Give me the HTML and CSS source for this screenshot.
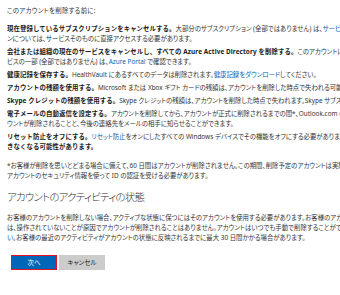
FILE: index.html
```html
<!DOCTYPE html>
<html lang="ja">
<head>
  <meta charset="utf-8">
  <title>アカウントの削除</title>
  <link rel="stylesheet" href="styles.css">
</head>
<body>
  <div class="page">
    <p class="intro">このアカウントを削除する前に:</p>

    <p class="item">
      <span class="line"><b>現在登録しているサブスクリプションをキャンセルする。</b>大部分のサブスクリプション (全部ではありません) は、<a href="#">サービスとサブスクリプション</a> でキャンセルできます。その他のサブスクリプショ</span>
      <span class="line">ンについては、サービスそのものに直接アクセスする必要があります。</span>
    </p>

    <p class="item">
      <span class="line"><b>会社または組織の現在のサービスをキャンセルし、すべての Azure Active Directory を削除する。</b>このアカウントに登録されているサー</span>
      <span class="line">ビスの一部 (全部ではありません) は、<a href="#">Azure Portal</a> で確認できます。</span>
    </p>

    <p class="item">
      <span class="line"><b>健康記録を保存する。</b>HealthVault にあるすべてのデータは削除されます。<a href="#">健康記録をダウンロード</a>してください。</span>
    </p>

    <p class="item">
      <span class="line"><b>アカウントの残額を使用する。</b>Microsoft または Xbox ギフト カードの残額は、アカウントを削除した時点で失われる可能性があります。</span>
    </p>

    <p class="item">
      <span class="line"><b>Skype クレジットの残額を使用する。</b>Skype クレジットの残額は、アカウントを削除した時点で失われます。Skype サブスクリプションは自動的にキャンセルされます。</span>
    </p>

    <p class="item">
      <span class="line"><b>電子メールの自動返信を設定する。</b>アカウントを削除してから、アカウントが正式に削除されるまでの間*、Outlook.com のメールに自動返信を設定すると、アカ</span>
      <span class="line">ウントが削除されることと、今後の連絡先をメールの相手に知らせることができます。</span>
    </p>

    <p class="item">
      <span class="line"><b>リセット防止をオフにする。</b><a href="#">リセット防止</a>をオンにしたすべての Windows デバイスでその機能をオフにする必要があります。<b>リセット防止をオフにしないと、デバイスを使用で</b></span>
      <span class="line"><b>きなくなる可能性があります。</b></span>
    </p>

    <p class="note">
      <span class="line">*お客様が削除を思いとどまる場合に備えて、60 日間はアカウントが削除されません。この期間、削除予定のアカウントは実際には閉じられていますが、再び開くには</span>
      <span class="line">アカウントのセキュリティ情報を使って ID の認証を受ける必要があります。</span>
    </p>

    <h2>アカウントのアクティビティの状態</h2>

    <p class="item">
      <span class="line">お客様のアカウントを削除しない場合、アクティブな状態に保つにはそのアカウントを使用する必要があります。お客様のアカウントが規約に従って有効である限り、Microsoft 側で</span>
      <span class="line">は、操作されていないことが原因でアカウントが削除されることはありません。アカウントはいつでも手動で削除することができます。<a href="#">詳細についてはこちらをご覧くださ</a></span>
      <span class="line"><a href="#">い</a>。お客様の最近のアクティビティがアカウントの状態に反映されるまでに最大 30 日間かかる場合があります。</span>
    </p>

    <div class="actions">
      <button class="btn btn-primary">次へ</button>
      <button class="btn btn-secondary">キャンセル</button>
    </div>
  </div>
</body>
</html>
```

FILE: styles.css
```css
:root {
  --text: #333333;
  --strong: #1a1a1a;
  --link: #0067b8;
  --primary: #0067b8;
  --focus: #e81123;
  --secondary: #cccccc;
}

html, body {
  margin: 0;
  background: #ffffff;
  overflow: hidden;
}

body {
  font-family: "Noto Sans", "Noto Sans CJK JP", sans-serif;
  font-size: 6.4px;
  color: var(--text);
  font-feature-settings: "palt";
}

.page {
  padding: 6px 0 0 7px;
}

p {
  margin: 0;
}

.line {
  display: block;
  height: 10px;
  line-height: 10px;
  white-space: nowrap;
  overflow: visible;
}

.intro {
  height: 10px;
  line-height: 10px;
  margin-bottom: 8px;
  letter-spacing: 0.3px;
}

.item {
  margin-bottom: 3px;
}

b {
  font-weight: 700;
  color: var(--strong);
  font-feature-settings: normal;
  letter-spacing: 0.1px;
}

a {
  color: var(--link);
  text-decoration: none;
}

.note {
  margin-top: 9px;
}

h2 {
  margin: 9px 0;
  height: 14px;
  font-size: 10.4px;
  line-height: 14px;
  font-weight: 300;
  letter-spacing: -0.7px;
  color: var(--text);
  white-space: nowrap;
}

.actions {
  display: flex;
  gap: 2px;
  margin: 12px 0 0 4px;
}

.btn {
  width: 46px;
  height: 15px;
  padding: 0;
  border: 1px solid transparent;
  font-family: inherit;
  font-size: 6.4px;
  font-feature-settings: "palt";
  cursor: pointer;
}

.btn-primary {
  background: var(--primary);
  border-color: var(--focus);
  color: #ffffff;
}

.btn-secondary {
  background: var(--secondary);
  color: var(--strong);
}
```
